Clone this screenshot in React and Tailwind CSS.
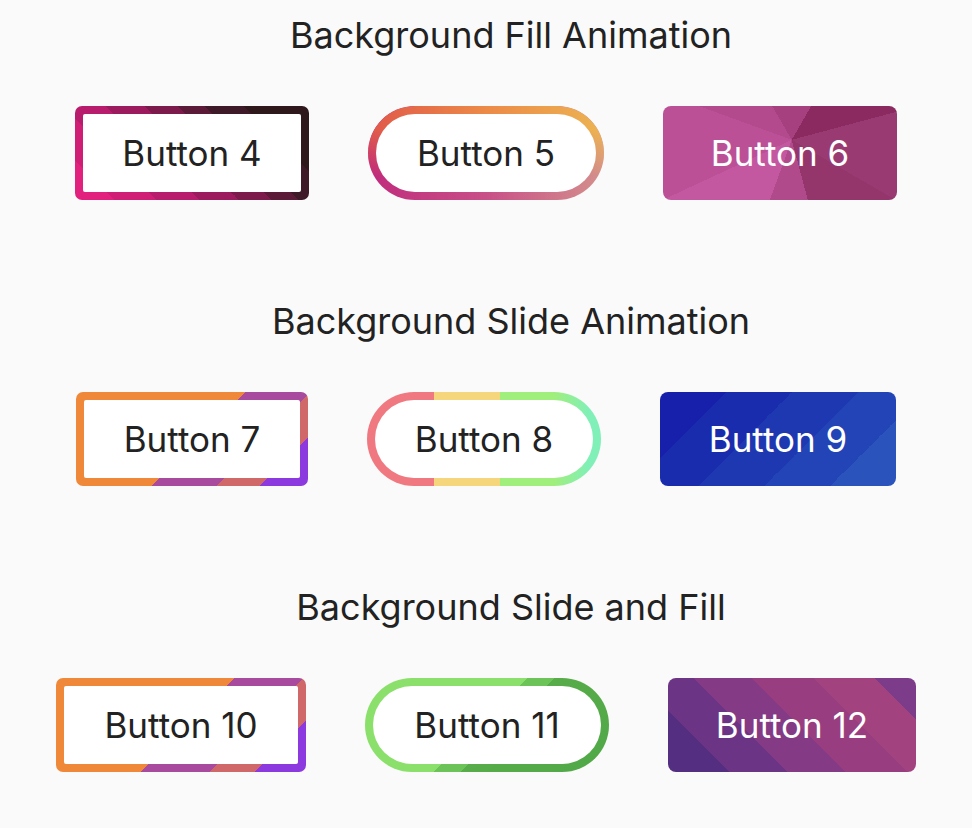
const font = { fontFamily: '"Inter", "Noto Sans", sans-serif' };

const BorderButton = ({ label, width, outer, inner, children }) => (
  <div className={`relative h-[94px] p-2 ${width} ${outer}`}>
    {children}
    <div className={`relative flex h-full items-center justify-center bg-white text-[35px] text-[#222] ${inner}`}>
      {label}
    </div>
  </div>
);

const FillButton = ({ label, width, className }) => (
  <div className={`flex h-[94px] items-center justify-center text-[35px] text-white ${width} ${className}`}>
    {label}
  </div>
);

const Section = ({ title, children }) => (
  <section className="flex flex-col">
    <h2 className="pl-[50px] text-center text-[36px] leading-[44px] text-[#222]">{title}</h2>
    <div className="mt-[49px] flex justify-center gap-[59px]">{children}</div>
  </section>
);

export default function App() {
  return (
    <div className="min-h-[828px] w-full bg-[#fafafa] pt-[13px]" style={font}>
      <div className="flex flex-col gap-[99px]">
        <Section title="Background Fill Animation">
          <BorderButton
            label="Button 4"
            width="w-[234px]"
            outer="rounded-[7px] bg-[linear-gradient(45deg,#e2207e_0%,#e2207e_12%,#d01e76_12%,#d01e76_25%,#b81c6c_25%,#b81c6c_38%,#9c1a5e_38%,#9c1a5e_50%,#7c1a4c_50%,#7c1a4c_60%,#5a1a38_60%,#5a1a38_68%,#3e1a28_68%,#3e1a28_80%,#2e181c_80%)]"
            inner="rounded-[2px]"
          />
          <BorderButton
            label="Button 5"
            width="w-[236px]"
            outer="rounded-full bg-[linear-gradient(to_right,#c02a7c,#c85088_50%,#d4908c)]"
            inner="rounded-full"
          >
            <div className="absolute inset-0 rounded-full bg-[linear-gradient(to_right,#e0584a,#ec8a48_50%,#ecb452)] [mask-image:linear-gradient(to_bottom,black_25%,transparent_75%)]" />
          </BorderButton>
          <FillButton
            label="Button 6"
            width="w-[234px]"
            className="rounded-[8px] bg-[conic-gradient(from_0deg_at_55%_36%,#a6407e_0deg,#a6407e_30deg,#8a2a60_30deg,#8a2a60_75deg,#9a3a72_75deg,#9a3a72_120deg,#94366c_120deg,#94366c_165deg,#b04a8a_165deg,#b04a8a_200deg,#c458a0_200deg,#c458a0_245deg,#bc5096_245deg,#bc5096_290deg,#b44a8e_290deg,#b44a8e_330deg,#a6407e_330deg)]"
          />
        </Section>

        <Section title="Background Slide Animation">
          <BorderButton
            label="Button 7"
            width="w-[232px]"
            outer="rounded-[7px] bg-[linear-gradient(135deg,#f0883a_0%,#f0883a_52%,#a84a9e_52%,#a84a9e_72%,#d0686a_72%,#d0686a_85%,#8c3ae0_85%)]"
            inner="rounded-[2px]"
          />
          <BorderButton
            label="Button 8"
            width="w-[234px]"
            outer="rounded-full bg-[linear-gradient(to_right,#f07880_0%,#f07880_28.5%,#f5d67c_28.5%,#f5d67c_57%,#a0ee7c_57%,#a0ee7c_80%,#80f0b8_95%)]"
            inner="rounded-full"
          />
          <FillButton
            label="Button 9"
            width="w-[236px]"
            className="rounded-[8px] bg-[linear-gradient(135deg,#1620aa_0%,#1620aa_20%,#1a2cae_20%,#1a2cae_40%,#1e38b2_40%,#1e38b2_60%,#2244b6_60%,#2244b6_80%,#2a54bc_80%)]"
          />
        </Section>

        <Section title="Background Slide and Fill">
          <BorderButton
            label="Button 10"
            width="w-[250px]"
            outer="rounded-[7px] bg-[linear-gradient(135deg,#f0883a_0%,#f0883a_52%,#a84a9e_52%,#a84a9e_72%,#d0686a_72%,#d0686a_85%,#8c3ae0_85%)]"
            inner="rounded-[2px]"
          />
          <BorderButton
            label="Button 11"
            width="w-[244px]"
            outer="rounded-full bg-[linear-gradient(135deg,#8ae06a_0%,#8ae06a_48%,#6cc458_48%,#6cc458_56%,#58ac4a_56%,#50a846_100%)]"
            inner="rounded-full"
          />
          <FillButton
            label="Button 12"
            width="w-[248px]"
            className="rounded-[8px] bg-[linear-gradient(45deg,#542e80_0%,#542e80_18%,#6c3484_18%,#6c3484_35%,#843a84_35%,#843a84_52%,#983e80_52%,#983e80_70%,#a24380_70%,#a24380_88%,#7c3c8a_88%)]"
          />
        </Section>
      </div>
    </div>
  );
}
